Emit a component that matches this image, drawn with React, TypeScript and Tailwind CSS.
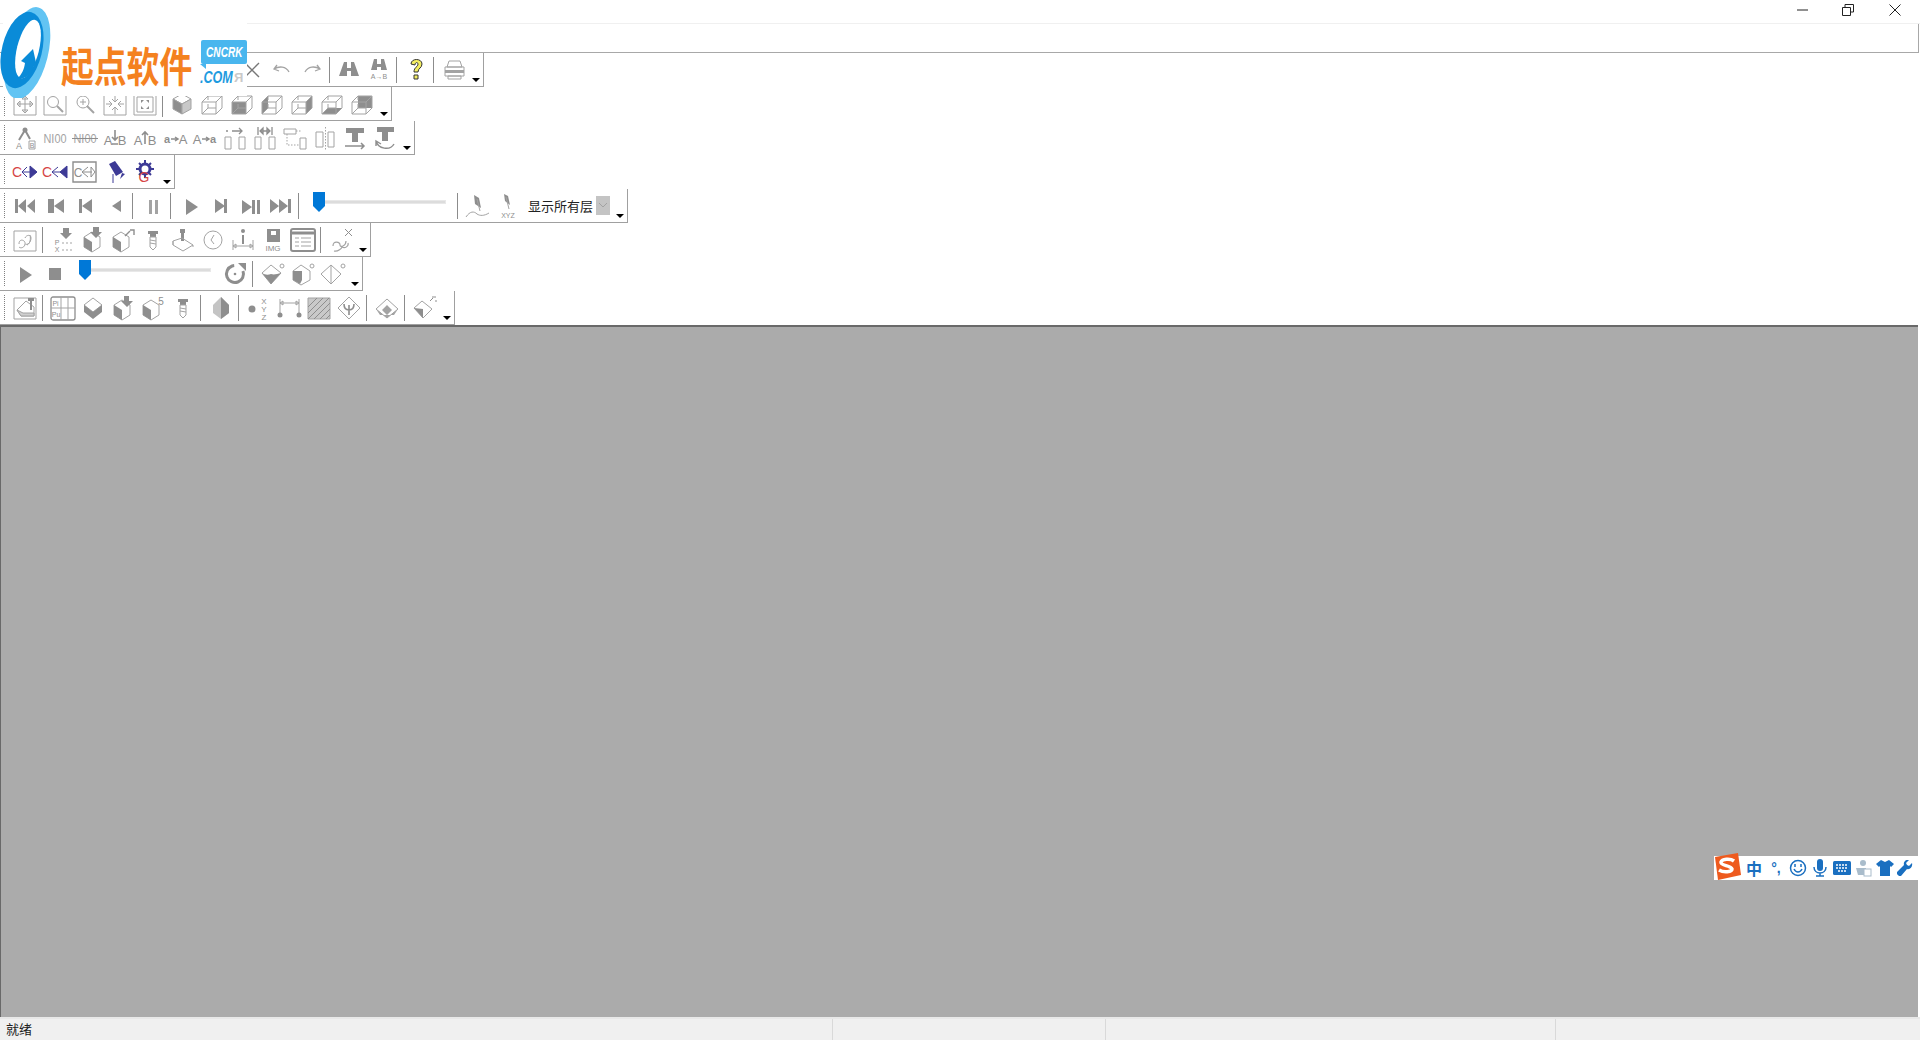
import React from "react";

const G = "#8e8e8e";
const L = "#a3a3a3";
const S = (p: { children: React.ReactNode }) => (
  <svg width="26" height="26" viewBox="0 0 26 26" fill="none" stroke={L} strokeWidth="1" style={{ fontFamily: '"Liberation Sans",sans-serif' }}>
    {p.children}
  </svg>
);
const T = (p: { x: number; y: number; s: number; t: string; c?: string; w?: number; len?: number }) => (
  <text x={p.x} y={p.y} fontSize={p.s} fill={p.c || G} stroke="none" fontWeight={p.w || 400} textAnchor="middle" textLength={p.len} lengthAdjust={p.len ? "spacingAndGlyphs" : undefined}>{p.t}</text>
);
const Wire = () => <path d="M3 11h14v12H3zM3 11l6-6h14v12l-6 6M17 11l6-6M9 5v4M9 13v4l-6 6M9 17h8" />;
const Down = () => <path d="M13 1h6v5h3l-6 6-6-6h3z" fill={G} stroke="none" />;
const Screw = () => (
  <g><path d="M8 4h10v3h-2v3h-6V7H8z" fill={G} stroke="none" /><path d="M10 10h6v10l-3 3-3-3zM10 13l6 1M10 16l6 1" /></g>
);

const icons: Record<string, React.ReactNode> = {
  x: <path d="M6 6l14 14M20 6L6 20" stroke="#777" strokeWidth="1.4" />,
  undo: <path d="M8 8l-3 4 5 2M5 12c5-3 12-3 15 3" strokeWidth="1.3" />,
  redo: <path d="M18 8l3 4-5 2M21 12c-5-3-12-3-15 3" strokeWidth="1.3" />,
  find: <path d="M8 5h3v6h4V5h3l5 14h-8v-5h-4v5H3z" fill={G} stroke="none" />,
  findr: <g><path d="M8 2h3v5h4V2h3l3 11h-6v-3h-4v3H5z" fill={G} stroke="none" /><T x={13} y={22} s={7} t="A→B" /></g>,
  help: <g><path d="M8 7c0-6 11-6 11 0 0 4-4 4-4 8h-4c0-5 4-5 4-8 0-2-3-2-3 1z" fill="#f4ee62" stroke="#333" /><path d="M11 18h4v4h-4z" fill="#f4ee62" stroke="#333" /></g>,
  print: <g><path d="M8 4h11l2 6H6zM4 10h19v9H4zM7 19h13v3H7z" /><path d="M4 13h19v3H4z" fill={L} stroke="none" /></g>,
  pan: <g><path d="M2 3h22v21H2z" /><path d="M13 6v15M6 13h14M13 5l-3 3h6zM13 22l-3-3h6zM5 13l3-3v6zM21 13l-3-3v6z" /></g>,
  zoomw: <g><path d="M2 3h22v21H2z" /><circle cx="11" cy="11" r="5.5" /><path d="M15 15l6 6" strokeWidth="2" /></g>,
  zoomp: <g><circle cx="11" cy="11" r="6" /><path d="M8 11h6M11 8v6" /><path d="M15 15l7 7" strokeWidth="2" /></g>,
  fitd: <g><path d="M2 3h22v21H2z" /><path d="M13 4v7M10 8l3 3 3-3M4 13h6M7 10l3 3-3 3M22 13h-6M19 10l-3 3 3 3M13 23v-7M10 19l3-3 3 3" /></g>,
  fit: <g><path d="M2 3h22v21H2zM5 6h16v15H5z" /><path d="M9 9l3 0-3 3zM17 9h-3l3 3zM9 18h3l-3-3zM17 18h-3l3-3z" fill={G} stroke="none" /></g>,
  cube: <g><path d="M13 3l9 5-9 5-9-5z" /><path d="M4 8l9 5v10l-9-5z" fill={G} /><path d="M22 8v10l-9 5V13z" fill="#c8c8c8" /></g>,
  c1: <Wire />,
  c2: <g><path d="M3 11h14v12H3z" fill={G} stroke="none" /><Wire /></g>,
  c3: <g><path d="M3 11l6-6v12l-6 6z" fill={G} stroke="none" /><Wire /></g>,
  c4: <g><path d="M17 11l6-6v12l-6 6z" fill={G} stroke="none" /><Wire /></g>,
  c5: <g><path d="M3 23l6-6h14l-6 6z" fill={G} stroke="none" /><Wire /></g>,
  c6: <g><path d="M9 5h14v12H9z" fill={G} stroke="none" /><Wire /></g>,
  comp: <g><path d="M13 5l-6 10M13 5l5 9" strokeWidth="2" stroke={G} /><circle cx="13" cy="5" r="2.5" fill={G} stroke="none" /><T x={7} y={24} s={9} t="A" /><path d="M17 16h6v8h-6z" /><T x={20} y={23} s={7} t="B" /></g>,
  n1: <T x={13} y={18} s={12} t="NI00" c={L} len={23} />,
  n2: <g><T x={13} y={18} s={12} t="NI00" c={L} len={23} /><path d="M0 13.500h26" stroke={G} /></g>,
  ab1: <g><T x={6} y={20} s={13} t="A" /><T x={20} y={20} s={13} t="B" /><path d="M13 5v10M10 12l3 3 3-3M10 19h6" stroke={G} strokeWidth="1.6" /></g>,
  ab2: <g><T x={6} y={20} s={13} t="A" /><T x={20} y={20} s={13} t="B" /><path d="M13 19V7M10 10l3-3 3 3" stroke={G} strokeWidth="1.6" /></g>,
  aa1: <g><T x={5} y={18} s={11} t="a" w={700} /><T x={21} y={19} s={13} t="A" /><path d="M9 14h6M13 12l3 2-3 2" stroke={G} strokeWidth="1.5" /></g>,
  aa2: <g><T x={5} y={19} s={13} t="A" /><T x={21} y={18} s={11} t="a" w={700} /><path d="M10 14h6M14 12l3 2-3 2" stroke={G} strokeWidth="1.5" /></g>,
  al1: <g><path d="M3 12h6v12H3zM17 12h6v12h-6z" /><path d="M10 6h10M17 3l3 3-3 3M4 6h2" stroke={G} strokeWidth="1.3" /></g>,
  al2: <g><path d="M3 12h6v12H3zM17 12h6v12h-6z" /><path d="M8 6h10M8 6l3-3v6zM18 6l-3-3v6zM6 2v8M20 2v8" stroke={G} strokeWidth="1.3" /></g>,
  al3: <g><path d="M2 4h12v5H2zM18 13h6v11h-6z" /><path d="M5 9v11h12M14 6h6" strokeDasharray="1.5 1.5" /></g>,
  al4: <g><path d="M4 7h7v15H4zM16 7h6v15h-6z" /><path d="M13.500 2v23" strokeDasharray="1.5 1.5" /></g>,
  t1: <g><path d="M4 3h18v5h-6v9h-6V8H4z" fill={G} stroke="none" /><path d="M3 21h19M19 18l3 3-3 3" stroke={G} strokeWidth="1.5" /></g>,
  t2: <g><path d="M5 2h17v5h-6v9h-6V7H5z" fill={G} stroke="none" /><path d="M4 16c2 8 14 10 18 3M4 21l0-5 5 3" stroke={G} strokeWidth="1.4" /></g>,
  g1: <g><T x={5} y={18} s={14} t="C" c="#d64545" /><path d="M10 13h9" stroke="#3d3a96" /><path d="M15 8l-5 5 5 5" stroke="#3d3a96" /><path d="M18 7l7 6-7 6z" fill="#3d3a96" stroke="#3d3a96" /></g>,
  g2: <g><T x={5} y={18} s={14} t="C" c="#d64545" /><path d="M10 13h9" stroke="#3d3a96" /><path d="M16 8l-6 5 6 5" stroke="#3d3a96" /><path d="M25 7l-7 6 7 6z" fill="#3d3a96" stroke="#3d3a96" /></g>,
  g3: <g><path d="M1 3h23v20H1z" stroke={G} strokeWidth="1.4" /><T x={6} y={18} s={12} t="C" /><path d="M10 13h10M16 8l-6 5 6 5M19 8l4 5-4 5z" stroke={G} /></g>,
  flag: <g><path d="M7 5l6-3 8 11-7 4z" fill="#3d3a96" stroke="none" /><path d="M11 15v9" stroke="#3d3a96" /><path d="M20 14l3 1-5 5z" fill="#3d3a96" stroke="none" /></g>,
  gear: <g><circle cx="13" cy="10" r="5" fill="none" stroke="#3d3a96" strokeWidth="3" /><path d="M13 1v3M13 16v3M4 10h3M19 10h3M7 4l2 2M19 4l-2 2M7 16l2-2M19 16l-2-2" stroke="#3d3a96" strokeWidth="2" /><T x={12} y={23} s={14} t="G" c="#d64545" /></g>,
  pf: <path d="M3 6h3v14H3zM23 6l-8 7 8 7zM14 6l-8 7 8 7z" fill={G} stroke="none" />,
  pp: <path d="M6 6h3v14H6zM9 6h3v14H9zM22 6l-10 7 10 7z" fill={G} stroke="none" />,
  pb: <path d="M7 6h3v14H7zM20 6l-10 7 10 7z" fill={G} stroke="none" />,
  bk: <path d="M19 7v12l-9-6z" fill={G} stroke="none" />,
  pause: <path d="M9 7h3v14H9zM15 7h3v14h-3z" fill={L} stroke="none" />,
  play: <path d="M8 6l12 8-12 8z" fill={G} stroke="none" />,
  nx: <path d="M7 6l10 7-10 7zM16 6h3v14h-3z" fill={G} stroke="none" />,
  nxb: <path d="M4 7l10 7-10 7zM14 7h3v14h-3zM19 7h3v14h-3z" fill={G} stroke="none" />,
  nf: <path d="M2 6l9 7-9 7zM11 6l9 7-9 7zM20 6h3v14h-3z" fill={G} stroke="none" />,
  d1: <g><path d="M9 2l5 3 2 10-6-4z" fill={G} stroke="none" /><path d="M12 6l3 12M1 24c4-6 8-6 11-3 3 2 7 2 12-1" /></g>,
  d2: <g><path d="M9 1l4 2 2 9-5-4z" fill={G} stroke="none" /><path d="M11 4l3 12" /><T x={13} y={25} s={7} t="XYZ" /></g>,
  wave: <g><path d="M2 4h22v20H2z" /><path d="M7 17c0-6 6-4 6-1s6 1 6-5c0-4-5-3-6 0M7 20c2 2 6 0 6-3M18 8c1 4 0 9-3 10" /></g>,
  px: <g><Down /><path d="M12 16h10M12 23h10" strokeDasharray="2 2" /><T x={7} y={18} s={7} t="P" /><T x={7} y={25} s={7} t="X" /></g>,
  dc1: <g><path d="M12 5l8 5v10l-8 5-8-5V10z" /><path d="M4 10l8 5v10l-8-5z" fill={G} stroke="none" /><path d="M13 0h6v5h3l-6 6-6-6h3z" fill={G} stroke="none" /></g>,
  dc2: <g><path d="M11 5l8 5v10l-8 5-8-5V10z" /><path d="M3 10l8 5v10l-8-5z" fill={G} stroke="none" /><path d="M15 9l5-5M20 3h4v5" stroke={G} strokeWidth="1.4" /></g>,
  screw: <Screw />,
  joy: <g><path d="M10 2h5v4h-1v8h-3V6h-1z" fill={G} stroke="none" /><path d="M3 14l9-3 11 7-10 6-10-6zM3 14v4M23 18v2" /></g>,
  clock: <g><circle cx="13" cy="13" r="9" /><path d="M14 8l-3 5 3 4" /></g>,
  dim: <g><circle cx="13" cy="4" r="2" fill={G} stroke="none" /><path d="M13 8v9" stroke={G} strokeWidth="2" /><path d="M3 13v10M23 13v10M3 19h20M3 19l3-2v4zM23 19l-3-2v4z" /></g>,
  img: <g><path d="M7 2h13v13H7z" fill={G} stroke="none" /><path d="M11 4h5v4h-5z" fill="#fff" stroke="none" /><T x={13} y={24} s={8} t="IMG" /></g>,
  list: <g><rect x="1" y="2" width="24" height="22" rx="2" stroke={G} strokeWidth="2" /><path d="M1 6h24" stroke={G} strokeWidth="3" /><path d="M5 11h4M11 11h10M5 15h4M11 15h10M5 19h4M11 19h10" /></g>,
  sx: <g><path d="M5 19c0-6 7-4 7-1s6 1 6-4M6 24c4 1 8-3 8-4 3 2 7-1 6-4" strokeWidth="1.2" /><path d="M17 2l7 7M24 2l-7 7" stroke={G} /></g>,
  stop: <path d="M7 7h12v12H7z" fill={G} stroke="none" />,
  refresh: <g><circle cx="13" cy="13" r="8.500" stroke={G} strokeWidth="3" strokeDasharray="42 12" transform="rotate(-20 13 13)" /><path d="M16 2h8v8z" fill={G} stroke="none" /><circle cx="13" cy="13" r="1.300" fill={G} stroke="none" /></g>,
  o1: <g><path d="M11 4l10 8-10 11-9-11z" /><path d="M2 12c3 2 6 2 9 1 3 1 6 0 10-1l-10 11z" fill={G} stroke="none" /><circle cx="22" cy="5" r="2" /></g>,
  o2: <g><path d="M11 4l9 6v9l-9 5-8-5v-9z" /><path d="M3 10h9v9l-2 4-7-4z" fill={G} stroke="none" /><circle cx="22" cy="5" r="2" /></g>,
  o3: <g><path d="M11 4l10 9-10 10-10-10zM11 4v19" /><circle cx="23" cy="5" r="2" /></g>,
  part: <g><path d="M2 3h22v21H2z" /><path d="M5 15l9-9 8 6v9H9z" /><path d="M5 15l4 6h13v-3H11z" fill="#cfcfcf" /><path d="M16 3h6v3h-2v9h-2V6h-2z" fill={G} stroke="none" /></g>,
  pa: <g><rect x="1" y="2" width="24" height="23" rx="2" stroke={G} strokeWidth="1.3" /><path d="M11 2v23M18 2v23M1 13h24" /><T x={5.500} y={11} s={7} t="Pi" /><T x={6} y={22} s={7} t="Pu" /></g>,
  pr: <g><path d="M13 3l9 7-9 7-9-7z" /><path d="M4 10l9 7 9-7v7l-9 7-9-7z" fill={G} stroke="none" /></g>,
  dc3: <g><path d="M12 5l8 5v10l-8 5-8-5V10z" /><path d="M4 10l8 5v10l-8-5z" fill={G} stroke="none" /><path d="M14 1h5v5h4l-6 6-6-6h3z" fill={G} stroke="none" /></g>,
  dc4: <g><path d="M11 5l8 5v10l-8 5-8-5V10z" /><path d="M3 10l8 5v10l-8-5z" fill={G} stroke="none" /><T x={21} y={10} s={10} t="5" /></g>,
  solid: <g><path d="M13 2l8 8v8l-8 6-8-6v-8z" fill="#c4c4c4" stroke="none" /><path d="M13 2l8 8v8l-8 6z" fill={G} stroke="none" /></g>,
  xyz: <g><circle cx="6" cy="14" r="3.500" fill={G} stroke="none" /><T x={18} y={9} s={8} t="X" /><T x={18} y={17} s={8} t="Y" /><T x={18} y={25} s={8} t="Z" /></g>,
  dim2: <g><path d="M4 4v18M23 4v18M4 8h19M4 8l3-2v4zM23 8l-3-2v4z" /><circle cx="4" cy="20" r="2.500" fill={G} stroke="none" /><circle cx="23" cy="20" r="2.500" fill={G} stroke="none" /></g>,
  hatch: <g><path d="M2 3h22v21H2z" fill="#c9c9c9" /><path d="M2 12l9-9M2 18l15-15M2 24L23 3M8 24l16-16M14 24l10-10M20 24l4-4" stroke={G} /></g>,
  trid: <g><path d="M13 2l11 11-11 11L2 13z" /><path d="M13 10v10M8 9c0 4 2 6 5 6s5-2 5-6" stroke={G} strokeWidth="1.6" /></g>,
  mt: <g><path d="M13 4l11 10-11 9L2 14z" /><path d="M13 10l5 5-5 5-5-5zM2 14l11 9 11-9-4 6H6z" fill={L} stroke="none" /></g>,
  mx: <g><path d="M10 6l10 8-9 9-9-10z" /><path d="M2 13l9 10v-9z" fill={G} stroke="none" /><path d="M18 6l3-3M20 2h4M23 6h2" stroke={G} /></g>,
};

const Icon = ({ n }: { n: string }) => (
  <div className="w-[30px] h-[30px] flex items-center justify-center shrink-0"><S>{icons[n]}</S></div>
);
const Sep = ({ tight }: { tight?: boolean }) => (
  <div className={tight ? "w-px h-[26px] bg-[#8c8c8c] ml-[2px] mr-[4px] shrink-0" : "w-px h-[26px] bg-[#8c8c8c] ml-[2px] mr-[5px] shrink-0"} />
);
const Drop = () => (
  <div className="w-[14px] h-[30px] flex items-end pb-[3px] shrink-0">
    <div className="ml-[3px] w-0 h-0 border-l-[4px] border-r-[4px] border-t-[4px] border-l-transparent border-r-transparent border-t-black" />
  </div>
);
const Grip = () => (
  <div className="absolute left-[4px] top-[4px] bottom-[4px] w-px border-l border-dotted border-[#808080]" />
);
const Bar = ({ items, tight, children }: { items?: string[]; tight?: boolean; children?: React.ReactNode }) => (
  <div className="relative h-[34px] w-fit flex items-center pl-[10px] border-b border-r border-[#a0a0a0] bg-white">
    <Grip />
    {items && items.map((n, i) => (n === "|" ? <Sep key={i} tight={tight} /> : <Icon key={i} n={n} />))}
    {children}
    <Drop />
  </div>
);
const Slider = ({ w, thumb, track }: { w: number; thumb: string; track: string }) => (
  <div className="relative h-[30px] shrink-0" style={{ width: w }}>
    <div className={`absolute top-[9px] h-[4px] right-[9px] bg-[#dcdcdc] border border-[#e8e8e8] ${track}`} />
    <svg className={`absolute top-[1px] ${thumb}`} width="12" height="20" viewBox="0 0 12 20">
      <path d="M0 0h12v14l-6 6-6-6z" fill="#0078d7" />
    </svg>
  </div>
);

const Logo = () => (
  <div className="absolute left-[3px] top-[3px] w-[244px] h-[93px] bg-white">
    <svg className="absolute left-[-3px] top-[0px]" width="56" height="95" viewBox="0 0 56 95">
      <ellipse cx="27" cy="50" rx="21" ry="47" transform="rotate(14 27 50)" fill="#62c4f3" />
      <ellipse cx="22" cy="47" rx="20" ry="39" transform="rotate(14 22 47)" fill="#0a8bd8" />
      <ellipse cx="28" cy="46" rx="11" ry="30" transform="rotate(14 28 46)" fill="#fff" />
      <path d="M33 46l-12 12 4 2c-1 7-3 11-8 16 10 0 15-6 17-13l3 1z" fill="#0a8bd8" />
    </svg>
    <div className="absolute left-[58px] top-[39px] origin-left scale-x-[.8] text-[41px] leading-[44px] font-bold text-[#f4811f] whitespace-nowrap [font-family:'Noto_Sans_CJK_SC',sans-serif]">起点软件</div>
    <div className="absolute left-[198px] top-[37px] w-[46px] h-[24px] bg-[#49b6ee] rounded-[2px] flex items-center justify-center">
      <span className="scale-x-[.72] text-white italic font-bold text-[14px] leading-[24px] [font-family:'Liberation_Sans',sans-serif]">CNCRK</span>
    </div>
    <div className="absolute left-[197px] top-[61px] w-0 h-0 border-l-[6px] border-t-[5px] border-l-transparent border-t-[#49b6ee]" />
    <div className="absolute left-[197px] top-[65px] origin-left scale-x-[.74] text-[#1e9be0] italic font-bold text-[17px] leading-[20px] [font-family:'Liberation_Sans',sans-serif]">.COM</div>
    <div className="absolute left-[231px] top-[67px] text-[#c9c9c9] font-bold text-[13px] leading-[16px] [font-family:'Liberation_Sans',sans-serif]">Я</div>
  </div>
);

const Ime = () => (
  <div className="absolute right-0 top-[529px] w-[204px] h-[24px] bg-white flex items-center pl-[28px] text-[#1a6fc0]">
    <svg className="absolute left-[-1px] top-[-4px]" width="29" height="29" viewBox="0 0 29 29">
      <path d="M2 5l23-4 3 22-23 5z" fill="#ee5a1e" />
      <path d="M21 9c-4-3-12-2-13 1-1 4 10 3 11 7 0 3-8 4-13 1" stroke="#fff" strokeWidth="3.500" fill="none" />
    </svg>
    <div className="w-[24px] text-center text-[16px] font-bold leading-[24px] [font-family:'Noto_Sans_CJK_SC',sans-serif]">中</div>
    <div className="w-[20px] text-center text-[14px] font-bold leading-[24px] [font-family:'Liberation_Sans',sans-serif]">°,</div>
    <svg className="ml-[2px]" width="20" height="20" viewBox="0 0 20 20" fill="none" stroke="#1a6fc0" strokeWidth="1.500"><circle cx="10" cy="10" r="7.500" /><path d="M6 11c2 4 6 4 8 0" /><path d="M7 6v3M13 6v3" /></svg>
    <svg className="ml-[3px]" width="18" height="20" viewBox="0 0 18 20" fill="#1a6fc0"><rect x="6" y="1" width="6" height="12" rx="3" /><path d="M3 9c0 8 12 8 12 0M9 15v3M5 18h8" stroke="#1a6fc0" strokeWidth="1.500" fill="none" /></svg>
    <svg className="ml-[4px]" width="18" height="14" viewBox="0 0 18 14"><rect width="18" height="14" rx="1.500" fill="#1a6fc0" /><path d="M3 4h12M3 7h12M5 10h8" stroke="#fff" strokeWidth="1.500" strokeDasharray="2 1" /></svg>
    <svg className="ml-[4px]" width="18" height="18" viewBox="0 0 18 18" fill="#a9bccb"><circle cx="8" cy="4" r="3" /><path d="M1 9h10v7H3z" /><rect x="9" y="10" width="7" height="7" fill="#fff" stroke="#a9bccb" /></svg>
    <svg className="ml-[3px]" width="18" height="16" viewBox="0 0 18 16" fill="#1a6fc0"><path d="M5 0l4 2 4-2 5 4-3 3-1-1v10H4V6L3 7 0 4z" /></svg>
    <svg className="ml-[3px]" width="16" height="16" viewBox="0 0 16 16" fill="#1a6fc0"><path d="M15 3l-3 3-2-1-1-2 3-3c-3-1-6 2-5 5L0 12c-1 2 2 5 4 4l6-7c3 1 6-2 5-6z" /></svg>
  </div>
);

export default function App() {
  return (
    <div className="relative w-[1920px] h-[1040px] overflow-hidden bg-white flex flex-col text-[13px] text-[#222] [font-family:'Noto_Sans_CJK_SC','Liberation_Sans',sans-serif]">
      <div className="h-[24px] shrink-0 border-b border-[#f0f0f0] flex items-center justify-end pb-[4px]">
        <svg width="12" height="2" className="mr-[33px]"><path d="M0 1h11" stroke="#222" /></svg>
        <svg width="12" height="12" className="mr-[35px]" fill="none" stroke="#222"><path d="M.5 3.500h8v8h-8zM3 3V.500h8.500V8H9" /></svg>
        <svg width="12" height="12" className="mr-[19px]" stroke="#222"><path d="M.500.500l11 11M11.500.500l-11 11" /></svg>
      </div>
      <div className="h-[29px] shrink-0 border-b border-r border-[#a8a8a8] mr-[1px]" />
      <Bar>
        <div className="w-[227px] shrink-0" />
        {["x", "undo", "redo", "|", "find", "findr", "|", "help", "|", "print"].map((n, i) => (n === "|" ? <Sep key={i} tight={i < 8} /> : <Icon key={i} n={n} />))}
      </Bar>
      <Bar tight items={["pan", "zoomw", "zoomp", "fitd", "fit", "|", "cube", "c1", "c2", "c3", "c4", "c5", "c6"]} />
      <Bar items={["comp", "n1", "n2", "ab1", "ab2", "aa1", "aa2", "al1", "al2", "al3", "al4", "t1", "t2"]} />
      <Bar items={["g1", "g2", "g3", "flag", "gear"]} />
      <Bar items={["pf", "pp", "pb", "bk", "|", "pause", "|", "play", "nx", "nxb", "nf", "|"]}>
        <Slider w={151} thumb="left-[9px]" track="left-[14px]" />
        <Sep />
        <Icon n="d1" />
        <Icon n="d2" />
        <div className="flex items-center ml-[5px] h-[30px] shrink-0">
          <span className="w-[68px] leading-[20px] whitespace-nowrap">显示所有层</span>
          <div className="w-[14px] h-[19px] bg-[#c4c4c4] flex items-center justify-center">
            <svg width="8" height="5" fill="none" stroke="#a2a2a2"><path d="M0 0l4 4 4-4" /></svg>
          </div>
        </div>
        <div className="w-[3px] shrink-0" />
      </Bar>
      <Bar items={["wave", "|", "px", "dc1", "dc2", "screw", "joy", "clock", "dim", "img", "list", "|", "sx"]} />
      <Bar items={["play", "stop"]}>
        <Slider w={150} thumb="left-[9px]" track="left-[14px]" />
        <Icon n="refresh" />
        <Sep />
        <Icon n="o1" />
        <Icon n="o2" />
        <Icon n="o3" />
      </Bar>
      <Bar items={["part", "|", "pa", "pr", "dc3", "dc4", "screw", "|", "solid", "|", "xyz", "dim2", "hatch", "trid", "|", "mt", "|", "mx"]} />
      <div className="relative flex-1 min-h-0 mr-[2px] bg-[#ababab] border-t-2 border-l border-[#696969]">
        <Ime />
      </div>
      <div className="h-[2px] shrink-0 bg-[#e8e8e8]" />
      <div className="h-[21px] shrink-0 bg-[#f0f0f0] flex items-center leading-[19px]">
        <div className="w-[833px] pl-[6px] border-r border-[#d9d9d9] h-full">就绪</div>
        <div className="w-[273px] border-r border-[#d9d9d9] h-full" />
        <div className="w-[450px] border-r border-[#d9d9d9] h-full" />
      </div>
      <div className="absolute left-[10px] top-[3px] w-[8px] h-[3px] bg-gradient-to-r from-[#c33] to-[#33c]" />
      <Logo />
    </div>
  );
}
